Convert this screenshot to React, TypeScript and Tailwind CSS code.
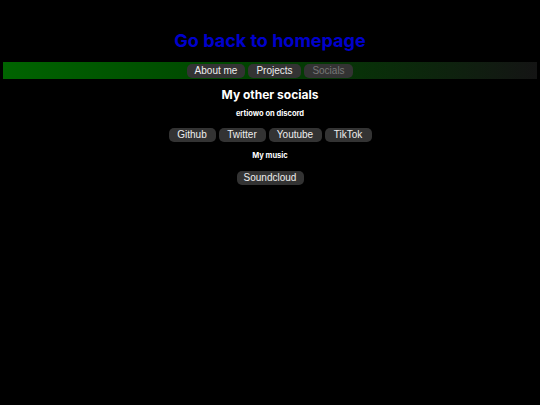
import React from 'react';

const base =
  'h-[14px] whitespace-nowrap rounded-[5px] bg-[#333333] px-0 text-[10px] leading-[14px]';
const btn = `${base} text-[#eeeeee]`;

export default function App() {
  return (
    <div className="min-h-[405px] w-full bg-black font-['Liberation_Sans',Arial,sans-serif]">
      {/* Header link */}
      <div className="flex justify-center pt-[30px]">
        <a className="font-['Inter',sans-serif] text-[18px] font-bold leading-[22px] text-[#0000cc]">
          Go back to homepage
        </a>
      </div>

      {/* Nav bar */}
      <div className="mx-[3px] mt-[10px] flex h-[17px] items-center justify-center gap-[3px] bg-[linear-gradient(to_right,#006400,#004400_45%,#141414)]">
        <button className={`${btn} w-[58px]`}>About me</button>
        <button className={`${btn} w-[53px]`}>Projects</button>
        <button className={`${base} w-[49px] text-[#777777]`}>Socials</button>
      </div>

      {/* Socials */}
      <div className="flex flex-col items-center font-['Inter',sans-serif] text-white">
        <h2 className="mt-[8px] text-[12px] font-bold leading-[15px]">My other socials</h2>
        <p className="mt-[7px] text-[7.5px] font-bold leading-[10px]">ertiowo on discord</p>
        <div className="mt-[9px] flex gap-[3px] font-['Liberation_Sans',Arial,sans-serif]">
          <button className={`${btn} w-[47px]`}>Github</button>
          <button className={`${btn} w-[47px]`}>Twitter</button>
          <button className={`${btn} w-[53px]`}>Youtube</button>
          <button className={`${btn} w-[47px]`}>TikTok</button>
        </div>
        <p className="mt-[9px] text-[7.5px] font-bold leading-[10px]">My music</p>
        <div className="mt-[10px] flex font-['Liberation_Sans',Arial,sans-serif]">
          <button className={`${btn} w-[67px]`}>Soundcloud</button>
        </div>
      </div>
    </div>
  );
}
